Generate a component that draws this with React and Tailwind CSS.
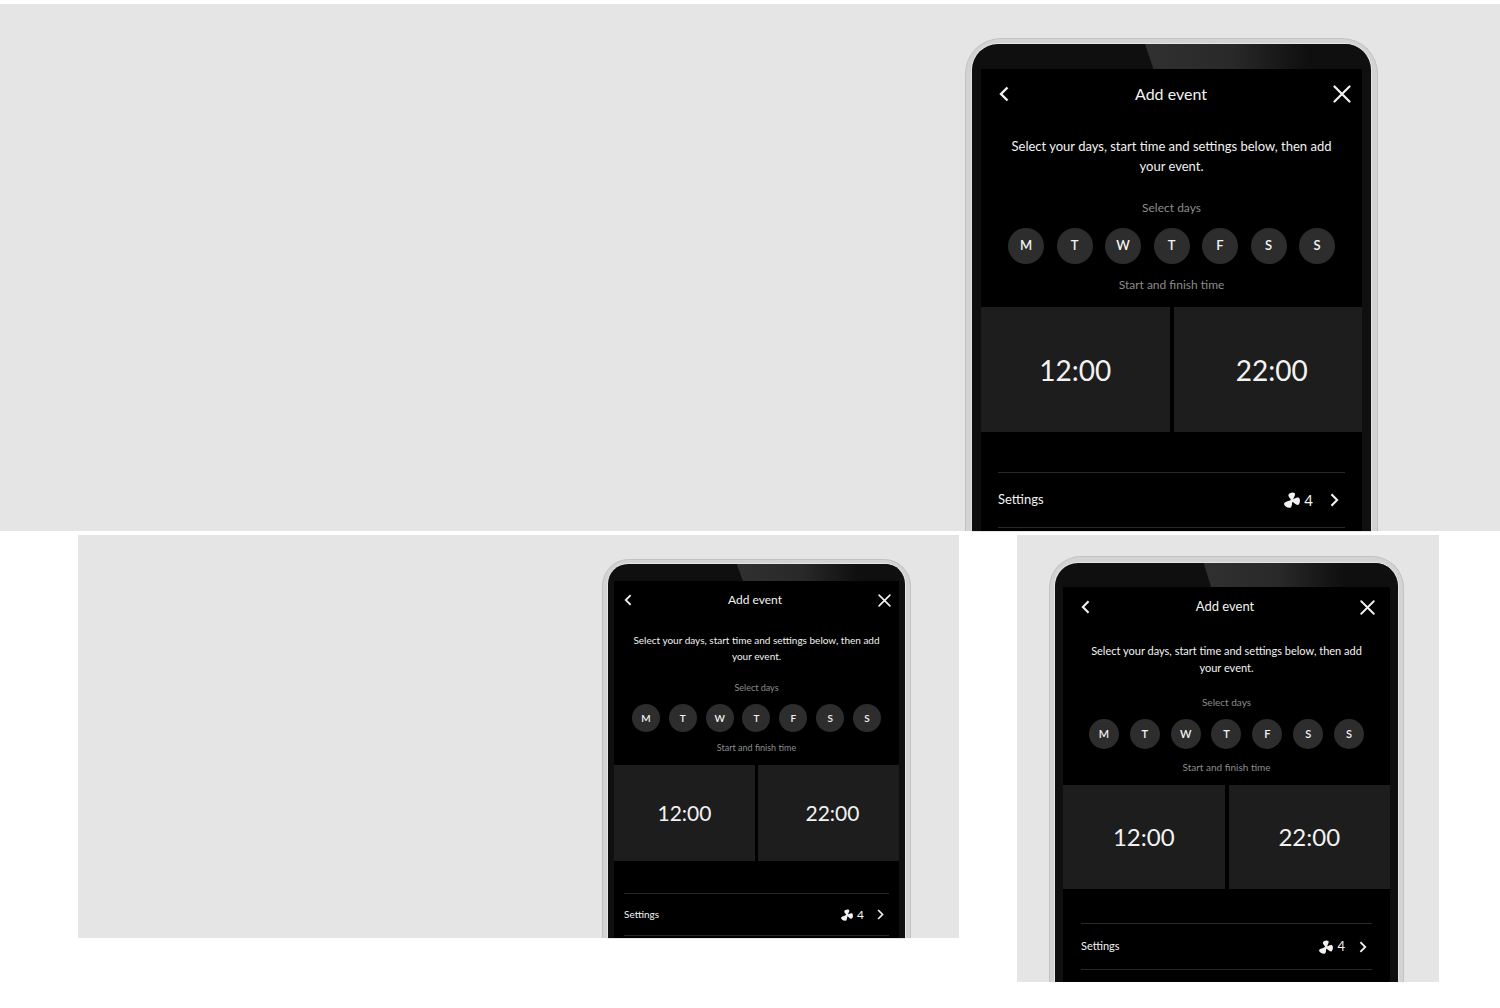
import React from 'react';

const DAYS = [
  { name: 'Monday', short: 'M' },
  { name: 'Tuesday', short: 'T' },
  { name: 'Wednesday', short: 'W' },
  { name: 'Thursday', short: 'T' },
  { name: 'Friday', short: 'F' },
  { name: 'Saturday', short: 'S' },
  { name: 'Sunday', short: 'S' },
];

// One set of classes per phone size
const SIZES = {
  lg: {
    frame: 'w-[413px] rounded-t-[36px] px-[6px] pt-[5px]',
    bezel: 'rounded-t-[26px] px-[9px]',
    top: 'h-[25px]',
    header: 'h-[50px] pl-[18px] pr-[11px]',
    title: 'text-[16px]',
    back: 'w-[10px] h-[16px]',
    close: 'w-[18px] h-[18px]',
    intro: 'mt-[17px] px-6 text-[13px] leading-[20px]',
    label: 'text-[12px] leading-[16px]',
    labelOne: 'mt-6',
    days: 'mt-3 px-[27px]',
    day: 'size-9 text-[13px]',
    labelTwo: 'mt-[13px]',
    times: 'mt-[14px] gap-1',
    time: 'h-[125px] text-[28px]',
    finish: 'pl-2',
    settings: 'pt-10 px-[17px] pb-[3px]',
    row: 'h-[56px] pr-[6px] text-[13px]',
    fan: 'size-4 mr-1',
    count: 'text-[15px]',
    next: 'w-[9px] h-[14px] ml-[17px]',
  },
  md: {
    frame: 'w-[355px] rounded-t-[32px] px-[5px] pt-[6px]',
    bezel: 'rounded-t-[23px] px-[8px]',
    top: 'h-[24px]',
    header: 'h-[40px] pl-[18px] pr-[15px]',
    title: 'text-[13px]',
    back: 'w-[9px] h-[14px]',
    close: 'w-[15px] h-[15px]',
    intro: 'mt-[15px] px-5 text-[11px] leading-[17px]',
    label: 'text-[10px] leading-[14px]',
    labelOne: 'mt-[19px]',
    days: 'mt-[10px] px-[26px]',
    day: 'size-[30px] text-[11px]',
    labelTwo: 'mt-[11px]',
    times: 'mt-[11px] gap-1',
    time: 'h-[104px] text-[24px]',
    finish: 'pl-0',
    settings: 'pt-[34px] px-[18px] pb-3',
    row: 'h-[47px] pr-[5px] text-[11px]',
    fan: 'size-[14px] mr-1',
    count: 'text-[13px]',
    next: 'w-[8px] h-[12px] ml-[14px]',
  },
  sm: {
    frame: 'w-[309px] rounded-t-[27px] px-[5px] pt-[4px]',
    bezel: 'rounded-t-[20px] px-[6px]',
    top: 'h-[17px]',
    header: 'h-[38px] pl-[10px] pr-[8px]',
    title: 'text-[12px]',
    back: 'w-[8px] h-[12px]',
    close: 'w-[13px] h-[13px]',
    intro: 'mt-[13px] px-4 text-[10px] leading-[16px]',
    label: 'text-[9px] leading-[12px]',
    labelOne: 'mt-[18px]',
    days: 'mt-[10px] px-[18px]',
    day: 'size-7 text-[10px]',
    labelTwo: 'mt-[10px]',
    times: 'mt-[11px] gap-[3px]',
    time: 'h-[96px] text-[21px]',
    finish: 'pl-2',
    settings: 'pt-8 px-[10px] pb-[2px]',
    row: 'h-[43px] pr-[5px] text-[10px]',
    fan: 'size-3 mr-1',
    count: 'text-[12px]',
    next: 'w-[7px] h-[11px] ml-[13px]',
  },
};

function Chevron({ className, flip }) {
  return (
    <svg className={className} viewBox="0 0 10 16" fill="none" stroke="currentColor" strokeWidth="2.4" aria-hidden="true">
      <path d={flip ? 'M1.5 1.5 L8 8 L1.5 14.5' : 'M8.5 1.5 L2 8 L8.5 14.5'} />
    </svg>
  );
}

function Cross({ className }) {
  return (
    <svg className={className} viewBox="0 0 18 18" fill="none" stroke="currentColor" strokeWidth="2.2" strokeLinecap="round" aria-hidden="true">
      <path d="M1.5 1.5 L16.5 16.5 M16.5 1.5 L1.5 16.5" />
    </svg>
  );
}

// Three-blade fan
function Fan({ className }) {
  return (
    <svg className={className} viewBox="0 0 16 16" fill="currentColor" aria-hidden="true">
      <path d="M7 8.6 C7.2 6.4 4.2 5.6 4.4 3 C4.8 .8 9 -.2 10.8 1.2 C11.8 3 9.6 5 9.2 7.6 Z" />
      <path d="M8.2 7.2 C10.2 7.6 12.4 4.8 14.8 5.8 C16.6 7.4 16.2 11.6 14.1 13 C12 13.6 10.6 10.6 7.9 9.8 Z" />
      <path d="M9 9 C7.4 10.4 8.8 13.6 6.8 15.4 C4.6 16.4 .5 14.6 0 12 C.4 9.4 5 9.6 7.2 7.6 Z" />
    </svg>
  );
}

function Phone({ size }) {
  const s = SIZES[size];

  return (
    <div className={`${s.frame} shrink-0 border-x border-t border-[#c2c2c2] bg-[#d3d3d3]`}>
      <div className={`${s.bezel} overflow-hidden bg-[#0f0f0f] shadow-[0_0_0_1px_#e6e6e6]`}>
        <div className={`${s.top} flex justify-end`}>
          {/* glare on the glass */}
          <div className="w-[57%] bg-linear-to-r from-[#303030] via-[#292929] via-40% to-[#0f0f0f] to-75% [clip-path:polygon(0_0,100%_0,100%_100%,4%_100%)]" />
        </div>

        <div className="bg-black text-[#f2f2f2]">
          <header className={`${s.header} flex items-center justify-between`}>
            <button type="button" aria-label="Back">
              <Chevron className={s.back} />
            </button>
            <h2 className={s.title}>Add event</h2>
            <button type="button" aria-label="Close">
              <Cross className={s.close} />
            </button>
          </header>

          <p className={`${s.intro} text-center`}>
            Select your days, start time and settings below, then add your event.
          </p>

          <h3 className={`${s.label} ${s.labelOne} text-center text-[#8c8c8c]`}>Select days</h3>
          <div className={`${s.days} flex justify-between`}>
            {DAYS.map((day) => (
              <button
                key={day.name}
                type="button"
                aria-label={day.name}
                className={`${s.day} rounded-full bg-[#2d2d2d] text-center font-semibold`}
              >
                {day.short}
              </button>
            ))}
          </div>

          <h3 className={`${s.label} ${s.labelTwo} text-center text-[#8c8c8c]`}>Start and finish time</h3>
          <div className={`${s.times} grid grid-cols-2`}>
            <button type="button" className={`${s.time} bg-[#1d1d1d]`}>12:00</button>
            <button type="button" className={`${s.time} ${s.finish} bg-[#1d1d1d]`}>22:00</button>
          </div>

          <div className={s.settings}>
            <button type="button" className={`${s.row} flex w-full items-center border-y border-[#282828]`}>
              <span>Settings</span>
              <Fan className={`${s.fan} ml-auto`} />
              <span className={s.count}>4</span>
              <Chevron className={s.next} flip />
            </button>
          </div>
        </div>
      </div>
    </div>
  );
}

function App() {
  return (
    <main className="flex flex-col gap-1 bg-white pt-1 font-['Lato',sans-serif]">
      <section className="flex justify-end bg-[#e5e5e5] pt-[34px] pr-[122px]">
        <Phone size="lg" />
      </section>

      <div className="flex items-start pr-[61px] pl-[78px]">
        <section className="mr-[58px] flex flex-1 justify-end bg-[#e5e5e5] pt-[24px] pr-12">
          <Phone size="sm" />
        </section>
        <section className="flex w-[422px] justify-end bg-[#e5e5e5] pt-[21px] pr-[35px]">
          <Phone size="md" />
        </section>
      </div>
    </main>
  );
}

export default App;
